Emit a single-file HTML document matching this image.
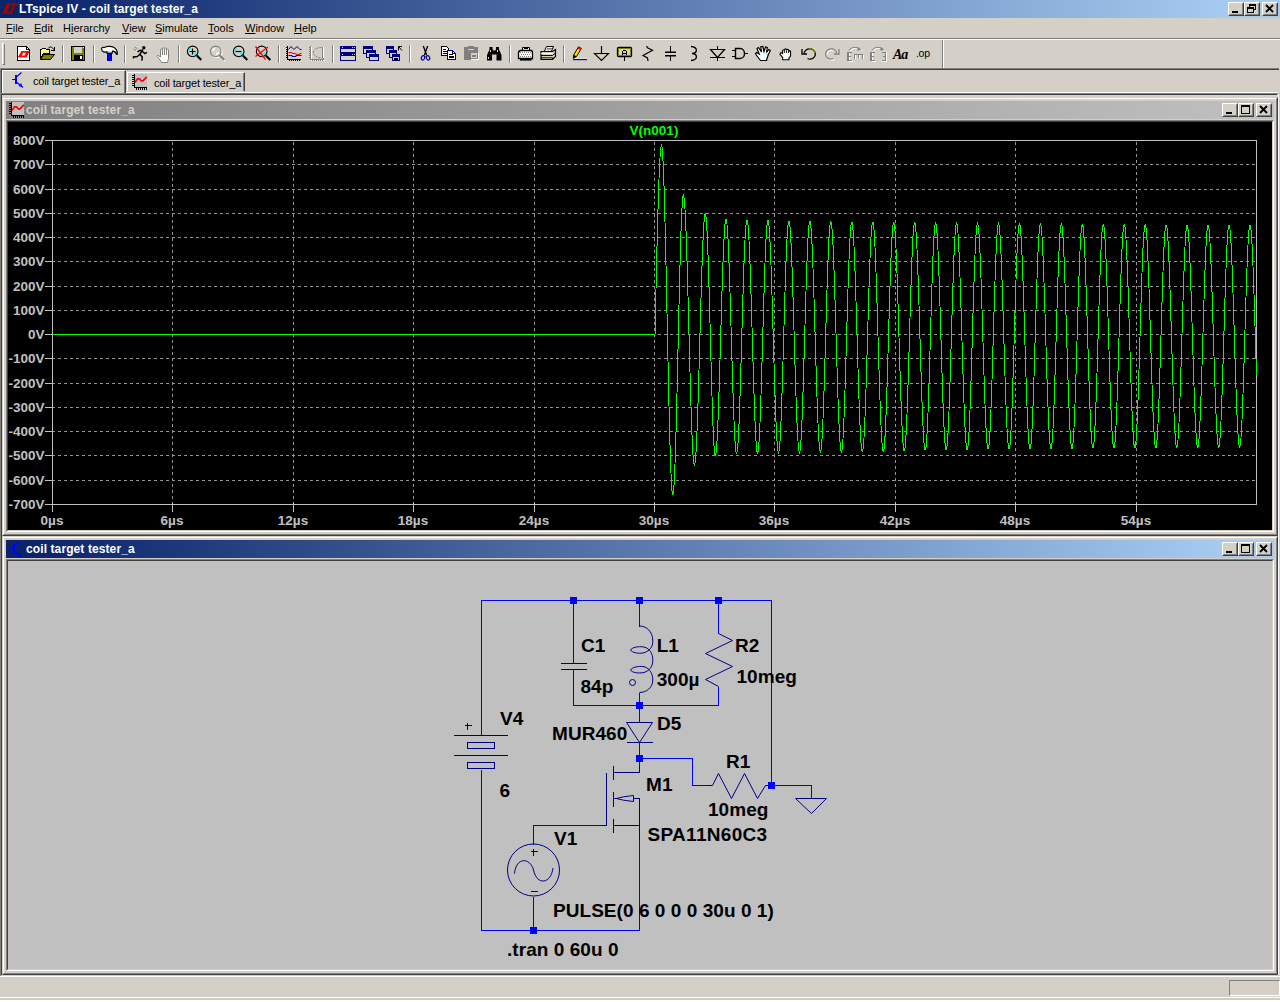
<!DOCTYPE html>
<html><head><meta charset="utf-8"><title>LTspice IV - coil target tester_a</title>
<style>
html,body{margin:0;padding:0;}
body{width:1280px;height:1002px;position:relative;overflow:hidden;background:#d4d0c8;font-family:"Liberation Sans",sans-serif;font-size:11px;color:#000;}
.abs{position:absolute;}
.hl{position:absolute;height:1px;}
.vl{position:absolute;width:1px;}
.tb{position:absolute;height:18px;color:#fff;font-weight:bold;font-size:12px;letter-spacing:0.1px;line-height:18px;white-space:nowrap;}
.btn{position:absolute;width:16px;height:14px;background:#d4d0c8;box-sizing:border-box;border:1px solid;border-color:#fff #404040 #404040 #fff;}
.btn:after{content:"";position:absolute;left:0;top:0;right:0;bottom:0;border:1px solid;border-color:#d4d0c8 #808080 #808080 #d4d0c8;}
.btn svg{position:absolute;left:-1px;top:-1px;z-index:2}
.menu span{position:absolute;top:0;line-height:20px;white-space:nowrap;}
.menu u{text-decoration:underline;}
.win{position:absolute;box-sizing:border-box;background:#d4d0c8;border:1px solid;border-color:#d4d0c8 #404040 #404040 #d4d0c8;}
.win:before{content:"";position:absolute;left:0;top:0;right:0;bottom:0;border:1px solid;border-color:#fff #808080 #808080 #fff;}
.sunk{position:absolute;box-sizing:border-box;border:1px solid;border-color:#808080 #fff #fff #808080;}
.sunk:before{content:"";position:absolute;left:0;top:0;right:0;bottom:0;border:1px solid;border-color:#404040 #d4d0c8 #d4d0c8 #404040;}
.sep{position:absolute;top:45px;width:2px;height:18px;border-left:1px solid #808080;border-right:1px solid #fff;box-sizing:border-box;}
.ico{position:absolute;top:46px;width:16px;height:16px;}
.tab{position:absolute;white-space:nowrap;letter-spacing:-0.17px;}
</style></head><body>

<!-- main title bar -->
<div class="abs" style="left:0;top:0;width:1280px;height:18px;background:linear-gradient(to right,#0a246a 0%,#0a246a 2%,#a6caf0 96%,#a6caf0 100%);"></div>
<svg class="abs" style="left:2px;top:2px;overflow:visible" width="16" height="14" viewBox="0 0 16 14"><path d="M5,1 H9 L5.5,9 H8.5 L7,12 H0 Z M10,1 H16 L15,3.5 H13.2 L9.8,12 H7.4 L10.8,3.5 H9 Z" fill="#a00000"/></svg>
<div class="tb" style="left:19px;top:0;">LTspice IV - coil target tester_a</div>
<div class="btn" style="left:1228px;top:2px;"><svg width="16" height="14"><rect x="4" y="9" width="6" height="2" fill="#000"/></svg></div>
<div class="btn" style="left:1244px;top:2px;"><svg width="16" height="14" shape-rendering="crispEdges"><rect x="5.5" y="2.5" width="6" height="5" fill="none" stroke="#000"/><rect x="5" y="2" width="7" height="2" fill="#000"/><rect x="3.5" y="5.5" width="6" height="5" fill="#d4d0c8" stroke="#000"/><rect x="3" y="5" width="7" height="2" fill="#000"/></svg></div>
<div class="btn" style="left:1262px;top:2px;"><svg width="16" height="14"><path d="M4,3 L11,10 M11,3 L4,10" stroke="#000" stroke-width="1.9" fill="none"/></svg></div>

<!-- menu -->
<div class="abs menu" style="left:0;top:18px;width:1280px;height:20px;">
<span style="left:6px"><u>F</u>ile</span><span style="left:34px"><u>E</u>dit</span><span style="left:63px">H<u>i</u>erarchy</span><span style="left:122px"><u>V</u>iew</span><span style="left:155px"><u>S</u>imulate</span><span style="left:208px"><u>T</u>ools</span><span style="left:245px"><u>W</u>indow</span><span style="left:294px"><u>H</u>elp</span>
</div>
<div class="hl" style="left:0;top:38px;width:1280px;background:#808080"></div>
<div class="hl" style="left:0;top:39px;width:1280px;background:#fff"></div>

<!-- toolbar -->
<div class="abs" style="left:2px;top:43px;width:3px;height:22px;box-sizing:border-box;border:1px solid;border-color:#fff #808080 #808080 #fff;"></div>
<div class="vl" style="left:942px;top:40px;height:28px;background:#808080"></div>
<div class="vl" style="left:943px;top:40px;height:28px;background:#fff"></div>
<svg class="abs" style="left:16px;top:46px;overflow:visible" width="16" height="16" viewBox="0 0 16 16" shape-rendering="crispEdges"><path d="M1.5,0.5 H10.5 L13.5,3.5 V14.5 H1.5 Z" fill="#fff" stroke="#000"/><path d="M10.5,0.5 V3.5 H13.5" fill="none" stroke="#000"/><path d="M5.5,5 H13.8 L10.5,11.5 H1.8 Z" fill="#f00" shape-rendering="auto"/><path d="M7.2,6.8 H9.8 L8.6,9.6 H5.8 Z" fill="#fff" shape-rendering="auto"/></svg>
<svg class="abs" style="left:39px;top:46px;overflow:visible" width="16" height="16" viewBox="0 0 16 16" shape-rendering="crispEdges"><path d="M1.5,12.5 V3.5 H2.5 L3.5,2.5 H6.5 L7.5,3.5 H10.5 V7.5 H4.5 Z" fill="#ffff80" stroke="#000"/><path d="M1.5,13.5 L4.5,8.5 H15.5 L11.5,13.5 Z" fill="#808000" stroke="#000" shape-rendering="auto"/><path d="M9,2.5 C10.5,0.3 13.5,0.5 14.5,3.5" stroke="#000" fill="none" shape-rendering="auto"/><path d="M12,4 H15.5 V1" stroke="#000" fill="none"/></svg>
<svg class="abs" style="left:70px;top:46px;overflow:visible" width="16" height="16" viewBox="0 0 16 16" shape-rendering="crispEdges"><rect x="1.5" y="0.5" width="13" height="14" fill="#808000" stroke="#000"/><rect x="4" y="1" width="8" height="6" fill="#d4d0c8"/><rect x="4" y="9" width="9" height="5" fill="#000"/><rect x="10" y="10" width="2" height="3" fill="#fff"/><rect x="13" y="1" width="1" height="1" fill="#fff"/></svg>
<svg class="abs" style="left:101px;top:46px;overflow:visible" width="16" height="16" viewBox="0 0 16 16" shape-rendering="crispEdges"><defs><linearGradient id="hg" x1="0" y1="0" x2="0" y2="1"><stop offset="0" stop-color="#fff"/><stop offset="0.5" stop-color="#fff"/><stop offset="1" stop-color="#909090"/></linearGradient></defs><path d="M0.6,3.2 C0.4,1.6 2,0.8 3.2,1.6 C5,0.2 10,-0.2 12.6,1.2 C15.2,2.6 16.4,5 16.4,8.2 L15.4,8.2 C14.6,6 13.2,5.2 11.6,5.2 L11,7.4 H6 L5.8,5.8 C4,6.6 0.8,6.2 0.6,3.2 Z" fill="url(#hg)" stroke="#000" stroke-width="1.2" shape-rendering="auto"/><rect x="6" y="7.5" width="5" height="7.5" fill="#0000a0"/><rect x="7" y="7.5" width="3" height="7.5" fill="#0000e0"/></svg>
<svg class="abs" style="left:132px;top:46px;overflow:visible" width="16" height="16" viewBox="0 0 16 16" shape-rendering="crispEdges"><g shape-rendering="auto"><circle cx="11.8" cy="1.8" r="1.7" fill="#000"/><path d="M10.8,3.5 L7.8,8.3 M10.6,4.2 L7.5,4.4 L5.5,6 M10.2,5.2 L12.8,7.6 L15,6.4 M7.8,8.3 L5.3,10.6 L1.5,11 V12.6 M7.8,8.3 L10.3,11 L9.8,14.6" stroke="#000" stroke-width="1.5" fill="none"/><path d="M2.5,1 L5.5,2.8 M1.5,3.2 L4,4.4" stroke="#808080"/></g></svg>
<svg class="abs" style="left:155px;top:46px;overflow:visible" width="16" height="16" viewBox="0 0 16 16" shape-rendering="crispEdges"><g shape-rendering="auto" transform="translate(1,1)"><path d="M5.5,15.5 L3,11.5 L0.8,9.2 L1.8,8.2 L4.5,10 V3 a1,1 0 0 1 2,0 V1.8 a1,1 0 0 1 2,0 V1.9 a1,1 0 0 1 2,0 V3.2 a1,1 0 0 1 2,0 V11.5 L11.5,15.5 Z" fill="#fff" stroke="#808080"/><path d="M6.5,3 V8 M8.5,2 V8 M10.5,3 V8" stroke="#808080" fill="none"/></g></svg>
<svg class="abs" style="left:186px;top:46px;overflow:visible" width="16" height="16" viewBox="0 0 16 16" shape-rendering="crispEdges"><g shape-rendering="auto"><circle cx="6.7" cy="5.4" r="5.3" fill="#d4d0c8" stroke="#000" stroke-width="1.1"/><path d="M2.8,4.8 A4,4 0 0 1 5,2.3" stroke="#00ffff" stroke-width="1.3" fill="none"/><path d="M10.2,6.2 A4,4 0 0 1 8,8.7" stroke="#00ffff" stroke-width="1.3" fill="none"/><path d="M10.8,9.5 L15.3,14" stroke="#000" stroke-width="2.1"/><path d="M3.5,5.5 H9.5 M6.5,2.5 V8.5" stroke="#000" stroke-width="1.2"/></g></svg>
<svg class="abs" style="left:209px;top:46px;overflow:visible" width="16" height="16" viewBox="0 0 16 16" shape-rendering="crispEdges"><g shape-rendering="auto"><circle cx="7.7" cy="6.4" r="5.3" fill="none" stroke="#fff" stroke-width="1.1"/><path d="M11.5,10.5 L16,15" stroke="#fff" stroke-width="2.2"/><circle cx="6.7" cy="5.4" r="5.3" fill="#d4d0c8" stroke="#808080" stroke-width="1.1"/><path d="M3.5,5 A3.2,3.2 0 0 1 6,2.5" stroke="#fff" stroke-width="1.3" fill="none"/><path d="M9.5,6 A3.2,3.2 0 0 1 7,8.5" stroke="#fff" stroke-width="1.3" fill="none"/><path d="M10.8,9.5 L15.3,14" stroke="#808080" stroke-width="2.1"/></g></svg>
<svg class="abs" style="left:232px;top:46px;overflow:visible" width="16" height="16" viewBox="0 0 16 16" shape-rendering="crispEdges"><g shape-rendering="auto"><circle cx="6.7" cy="5.4" r="5.3" fill="#d4d0c8" stroke="#000" stroke-width="1.1"/><path d="M2.8,4.8 A4,4 0 0 1 5,2.3" stroke="#00ffff" stroke-width="1.3" fill="none"/><path d="M10.2,6.2 A4,4 0 0 1 8,8.7" stroke="#00ffff" stroke-width="1.3" fill="none"/><path d="M10.8,9.5 L15.3,14" stroke="#000" stroke-width="2.1"/><path d="M3.5,5.5 H9.5" stroke="#000" stroke-width="1.2"/></g></svg>
<svg class="abs" style="left:255px;top:46px;overflow:visible" width="16" height="16" viewBox="0 0 16 16" shape-rendering="crispEdges"><g shape-rendering="auto"><circle cx="6.7" cy="5.4" r="5.3" fill="#d4d0c8" stroke="#000" stroke-width="1.1"/><path d="M2.8,4.8 A4,4 0 0 1 5,2.3" stroke="#00ffff" stroke-width="1.3" fill="none"/><path d="M10.2,6.2 A4,4 0 0 1 8,8.7" stroke="#00ffff" stroke-width="1.3" fill="none"/><path d="M10.8,9.5 L15.3,14" stroke="#000" stroke-width="2.1"/><path d="M0.5,0.5 L10.5,13.5 M13,1 L0.5,10.5" stroke="#f00" stroke-width="1.3"/></g></svg>
<svg class="abs" style="left:286px;top:46px;overflow:visible" width="16" height="16" viewBox="0 0 16 16" shape-rendering="crispEdges"><path d="M1.5,0 V14 M1,13.5 H15" stroke="#000"/><path d="M0,1.5 H1 M0,3.5 H1 M0,5.5 H1 M0,7.5 H1 M0,9.5 H1 M0,11.5 H1 M3.5,14 V15 M5.5,14 V15 M7.5,14 V15 M9.5,14 V15 M11.5,14 V15 M13.5,14 V15" stroke="#000"/><g shape-rendering="auto" fill="none"><path d="M2.5,3.5 L5,0.5 L8,3.5 L11,0.5 L14,3.5 H15.5" stroke="#000080"/><path d="M2.5,6.5 H5 L7,7.5 H9 L11,8.5 H13 L15.5,7" stroke="#f00" stroke-width="1.1"/><path d="M2.5,9.5 H5.5 L6.5,10.5 H9.5 L10.5,9.5 H15.5" stroke="#0000c0" stroke-width="1.1"/></g></svg>
<svg class="abs" style="left:309px;top:46px;overflow:visible" width="16" height="16" viewBox="0 0 16 16" shape-rendering="crispEdges"><path d="M2.5,1 V15 M2,14.5 H16" stroke="#fff"/><path d="M1.5,0 V14 M1,13.5 H15" stroke="#808080"/><path d="M0,1.5 H1 M0,3.5 H1 M0,5.5 H1 M0,7.5 H1 M0,9.5 H1 M0,11.5 H1 M3.5,14 V15 M5.5,14 V15 M7.5,14 V15 M9.5,14 V15 M11.5,14 V15 M13.5,14 V15" stroke="#808080" stroke-dasharray="1 0"/><g shape-rendering="auto" fill="none"><path d="M12.5,1.5 C6,1.5 4,5 4.5,7 C5,10 8,12 13.5,12" stroke="#808080" stroke-dasharray="2 1"/><path d="M13.5,1 V12 M14.5,2 V13" stroke="#808080"/><path d="M14.5,1 V12" stroke="#fff"/></g></svg>
<svg class="abs" style="left:340px;top:46px;overflow:visible" width="16" height="16" viewBox="0 0 16 16" shape-rendering="crispEdges"><rect x="0.5" y="0.5" width="15" height="6" fill="#d4d0c8" stroke="#000080"/><rect x="0" y="0" width="16" height="3" fill="#000080"/><rect x="0.5" y="7.5" width="15" height="7" fill="#d4d0c8" stroke="#000080"/><rect x="0" y="7" width="16" height="3" fill="#000080"/><rect x="2" y="1" width="1" height="1" fill="#d4d0c8"/><rect x="12" y="1" width="1" height="1" fill="#d4d0c8"/><rect x="14" y="1" width="1" height="1" fill="#d4d0c8"/><rect x="2" y="8" width="1" height="1" fill="#d4d0c8"/><rect x="12" y="8" width="1" height="1" fill="#d4d0c8"/><rect x="14" y="8" width="1" height="1" fill="#d4d0c8"/></svg>
<svg class="abs" style="left:363px;top:46px;overflow:visible" width="16" height="16" viewBox="0 0 16 16" shape-rendering="crispEdges"><rect x="0.5" y="0.5" width="9" height="7" fill="#d4d0c8" stroke="#000080"/><rect x="0" y="0" width="10" height="3" fill="#000080"/><rect x="3.5" y="4.5" width="9" height="7" fill="#d4d0c8" stroke="#000080"/><rect x="3" y="4" width="10" height="3" fill="#000080"/><rect x="6.5" y="8.5" width="9" height="6" fill="#d4d0c8" stroke="#000080"/><rect x="6" y="8" width="10" height="3" fill="#000080"/></svg>
<svg class="abs" style="left:386px;top:46px;overflow:visible" width="16" height="16" viewBox="0 0 16 16" shape-rendering="crispEdges"><rect x="0.5" y="0.5" width="7" height="7" fill="#d4d0c8" stroke="#000080"/><rect x="0" y="0" width="8" height="3" fill="#000080"/><rect x="3.5" y="4.5" width="7" height="7" fill="#d4d0c8" stroke="#000080"/><rect x="3" y="4" width="8" height="3" fill="#000080"/><rect x="6.5" y="8.5" width="7" height="6" fill="#d4d0c8" stroke="#000080"/><rect x="6" y="8" width="8" height="3" fill="#000080"/><rect x="8" y="12" width="4" height="1.5" fill="#000"/><path d="M12.5,4.5 V0.5 H16 M12.5,0.5 L16,4.5" stroke="#000" fill="none" shape-rendering="auto"/></svg>
<svg class="abs" style="left:417px;top:46px;overflow:visible" width="16" height="16" viewBox="0 0 16 16" shape-rendering="crispEdges"><g shape-rendering="auto" fill="none"><path d="M6.3,0 L9.6,9 M10.7,0 L7.4,9" stroke="#000" stroke-width="1.3"/><ellipse cx="6" cy="11.8" rx="1.6" ry="2.3" stroke="#0000a0" stroke-width="1.2" transform="rotate(20 6 11.8)"/><ellipse cx="11" cy="11.8" rx="1.6" ry="2.3" stroke="#0000a0" stroke-width="1.2" transform="rotate(-20 11 11.8)"/></g></svg>
<svg class="abs" style="left:440px;top:46px;overflow:visible" width="16" height="16" viewBox="0 0 16 16" shape-rendering="crispEdges"><path d="M1.5,0.5 H6.5 L8.5,2.5 V9.5 H1.5 Z" fill="#fff" stroke="#000"/><path d="M3,3.5 H6 M3,5.5 H7 M3,7.5 H7" stroke="#000"/><path d="M7.5,4.5 H12.5 L15.5,7.5 V13.5 H7.5 Z" fill="#fff" stroke="#000080"/><path d="M12.5,4.5 V7.5 H15.5" stroke="#000080" fill="none"/><path d="M9,8.5 H13 M9,10.5 H14 M9,11.5 H14" stroke="#000"/></svg>
<svg class="abs" style="left:463px;top:46px;overflow:visible" width="16" height="16" viewBox="0 0 16 16" shape-rendering="crispEdges"><rect x="1" y="1" width="14" height="13" rx="1" fill="#808080"/><rect x="5" y="0" width="6" height="2" fill="#808080"/><rect x="5" y="3" width="6" height="1" fill="#d4d0c8"/><rect x="8.5" y="7.5" width="7" height="6" fill="#d4d0c8" stroke="#fff"/><rect x="7.5" y="6.5" width="7" height="6" fill="#d4d0c8" stroke="#808080"/><path d="M9,9.5 H13 M9,10.5 H13" stroke="#808080"/></svg>
<svg class="abs" style="left:486px;top:46px;overflow:visible" width="16" height="16" viewBox="0 0 16 16" shape-rendering="crispEdges"><g shape-rendering="auto"><path d="M3.5,1 H6.5 V3 L7,4.5 H9.5 L10,3 V1 H13 V3.5 L15.5,9 V14.5 H10.5 V8.5 H6 V14.5 H1 V9 L3.5,3.5 Z" fill="#000"/><rect x="4" y="4" width="1" height="2" fill="#d4d0c8"/><rect x="11" y="4" width="1" height="2" fill="#d4d0c8"/><rect x="2" y="11" width="1" height="2" fill="#d4d0c8"/></g></svg>
<svg class="abs" style="left:517px;top:46px;overflow:visible" width="16" height="16" viewBox="0 0 16 16" shape-rendering="crispEdges"><g shape-rendering="auto"><path d="M5.5,4.5 V1.5 H12.5 V4.5" fill="#fff" stroke="#000"/><path d="M7,3 L8,2 L9,3 L10,2 L11,3" stroke="#000" fill="none"/><path d="M1.5,7 C1.5,5.5 2.5,4.5 4,4.5 H14 C15,4.5 15.5,5.5 15.5,7 V12.5 H1.5 Z" fill="#fff" stroke="#000" stroke-width="1.3"/><path d="M3,6.5 H14 M4,8.5 H14 M3,10.5 H14" stroke="#808080" stroke-dasharray="1 1"/><path d="M3,13.8 H14.5" stroke="#000" stroke-width="1.6"/></g></svg>
<svg class="abs" style="left:540px;top:46px;overflow:visible" width="16" height="16" viewBox="0 0 16 16" shape-rendering="crispEdges"><g shape-rendering="auto"><path d="M4.5,5 L6.5,0.5 H13.5 L11.5,5" fill="#fff" stroke="#000"/><path d="M7,2.5 H12 M6.5,3.8 H11" stroke="#808080"/><path d="M1,5.5 H12.5 L15.5,3.5 V10.5 L12.5,13.5 H1 Z" fill="#d4d0c8" stroke="#000" stroke-width="1.2"/><path d="M1,9.5 H12.5 L15.5,7" stroke="#000" fill="none"/><path d="M1,7.5 H12.5" stroke="#fff"/><rect x="6" y="10.6" width="3" height="1.4" fill="#ffff00"/><path d="M1,11.8 H12.5 V13" stroke="#000" fill="none"/></g></svg>
<svg class="abs" style="left:571px;top:46px;overflow:visible" width="16" height="16" viewBox="0 0 16 16" shape-rendering="crispEdges"><g shape-rendering="auto"><path d="M2,13.5 H16" stroke="#00f" stroke-width="1.4"/><path d="M2,12.5 H16" stroke="#e8e0c0"/><path d="M2.2,12.3 L2.8,8.8 L7.5,0.8 L10.3,2.4 L5.6,10.4 Z" fill="#ffe000" stroke="#000"/><path d="M7,1.8 L9.6,3.3" stroke="#f00" stroke-width="1.6"/><path d="M2.2,12.3 L2.8,8.8 L5.6,10.4 Z" fill="#000"/></g></svg>
<svg class="abs" style="left:594px;top:46px;overflow:visible" width="16" height="16" viewBox="0 0 16 16" shape-rendering="crispEdges"><g shape-rendering="auto"><path d="M7.5,0 V7.5" stroke="#000" stroke-width="1.2"/><path d="M0.5,7.5 H14.5 L7.5,14.5 Z" fill="#c8c088" stroke="#000" stroke-width="1.2"/><path d="M2.5,8.5 H12.5 L7.5,13 Z" fill="#d4d0c8"/></g></svg>
<svg class="abs" style="left:617px;top:46px;overflow:visible" width="16" height="16" viewBox="0 0 16 16" shape-rendering="crispEdges"><rect x="0.5" y="1.5" width="14" height="9" rx="1" fill="#d4d0c8" stroke="#000" stroke-width="1.3" shape-rendering="auto"/><path d="M1.5,2.5 H13.5 V9.5 H1.5 Z" fill="none" stroke="#808000"/><path d="M7.5,11 V15" stroke="#000" stroke-width="1.2"/><path d="M5.5,9 V5.5 L6.5,4.5 H8.5 L9.5,5.5 V9 M5.5,7.5 H9.5" stroke="#000" fill="none"/></svg>
<svg class="abs" style="left:640px;top:46px;overflow:visible" width="16" height="16" viewBox="0 0 16 16" shape-rendering="crispEdges"><path d="M6.5,0 L7.5,1.8 L12.5,4.2 L3,9.5 L7.5,12 L8,15" stroke="#000" stroke-width="1.2" fill="none" shape-rendering="auto"/></svg>
<svg class="abs" style="left:663px;top:46px;overflow:visible" width="16" height="16" viewBox="0 0 16 16" shape-rendering="crispEdges"><path d="M7.5,0 V6 M7.5,10 V15" stroke="#000"/><path d="M2,6.2 H13 M2,9.7 H13" stroke="#000" stroke-width="1.5" shape-rendering="auto"/></svg>
<svg class="abs" style="left:686px;top:46px;overflow:visible" width="16" height="16" viewBox="0 0 16 16" shape-rendering="crispEdges"><path d="M5,0.5 C12,1 12,7 6,7.5 C12,8 12,14 5,14.5" stroke="#000" stroke-width="1.3" fill="none" shape-rendering="auto"/></svg>
<svg class="abs" style="left:709px;top:46px;overflow:visible" width="16" height="16" viewBox="0 0 16 16" shape-rendering="crispEdges"><g shape-rendering="auto"><path d="M8.5,0 V15" stroke="#000"/><path d="M1.5,3.5 H15.5 L8.5,11.5 Z" fill="#d4d0c8" stroke="#000" stroke-width="1.2"/></g><path d="M1,11.5 H16" stroke="#000"/></svg>
<svg class="abs" style="left:732px;top:46px;overflow:visible" width="16" height="16" viewBox="0 0 16 16" shape-rendering="crispEdges"><g shape-rendering="auto"><path d="M3.5,2.5 H8 C14,2.5 14,12.5 8,12.5 H3.5 Z" fill="#d4d0c8" stroke="#000" stroke-width="1.4"/></g><path d="M0,4.5 H3 M0,10.5 H3 M12,7.5 H16" stroke="#000"/></svg>
<svg class="abs" style="left:755px;top:46px;overflow:visible" width="16" height="16" viewBox="0 0 16 16" shape-rendering="crispEdges"><g shape-rendering="auto"><path d="M5.5,14.5 L2,10 L0.5,7.5 L1.8,6.5 L4.2,8 L2,2.5 L3.5,1.5 L6.5,6 L5.8,0.8 L7.8,0.5 L9,5.5 L10.5,1 L12.3,1.5 L11.5,6.5 L13.8,3.5 L15.3,4.5 L13,9.5 L11.5,14.5 Z" fill="#fff" stroke="#000" stroke-width="1.2"/><rect x="11.5" y="7.5" width="1" height="1.5" fill="#00c0c0"/></g></svg>
<svg class="abs" style="left:778px;top:46px;overflow:visible" width="16" height="16" viewBox="0 0 16 16" shape-rendering="crispEdges"><g shape-rendering="auto" transform="translate(0.6,1.6) scale(0.9)"><path d="M4.5,13.5 V11 L1.5,7.5 L2.5,5.5 L4.5,6.5 V3.5 a1,1 0 0 1 2.2,0 V2.5 a1,1 0 0 1 2.2,0 V3 a1,1 0 0 1 2.2,0 V4.5 a1,1 0 0 1 2.2,0 V9.5 L11.5,11.5 V13.5 Z" fill="#fff" stroke="#000" stroke-width="1.2"/><path d="M6.7,3.5 V6 M8.9,3 V6 M11.1,4 V6" stroke="#000" fill="none"/></g></svg>
<svg class="abs" style="left:801px;top:46px;overflow:visible" width="16" height="16" viewBox="0 0 16 16" shape-rendering="crispEdges"><g shape-rendering="auto" fill="none"><path d="M3,7 C5,1.5 12,1.5 14,6.5 C15.5,11 10.5,14.5 6.5,12.5" stroke="#000" stroke-width="1.3"/><path d="M8,2.8 C11,2.2 13.5,4.5 14.2,7" stroke="#808000" stroke-width="1.3"/><path d="M1,3 V8 H6" stroke="#000" stroke-width="1.3"/></g></svg>
<svg class="abs" style="left:824px;top:46px;overflow:visible" width="16" height="16" viewBox="0 0 16 16" shape-rendering="crispEdges"><g shape-rendering="auto" fill="none"><path d="M14,8 C12,2.5 5,2.5 3,7.5 C1.5,12 6.5,15.5 10.5,13.5" stroke="#fff" stroke-width="1.3"/><path d="M13,7 C11,1.5 4,1.5 2,6.5 C0.5,11 5.5,14.5 9.5,12.5" stroke="#808080" stroke-width="1.3"/><path d="M15,3 V8 H10" stroke="#808080" stroke-width="1.3"/></g></svg>
<svg class="abs" style="left:847px;top:46px;overflow:visible" width="16" height="16" viewBox="0 0 16 16" shape-rendering="crispEdges"><g shape-rendering="auto" fill="none"><path d="M3,5.5 C5,1.5 11,1.5 14.5,4.5" stroke="#fff"/><path d="M2,4.5 C4,0.5 10,0.5 13.5,3.5" stroke="#808080"/><path d="M11,1 L14,4 L10,4.5 Z" fill="#808080"/></g><path d="M2.5,7 V15.5 M2,15.5 H6" stroke="#fff" fill="none"/><path d="M1,6 V15 M0,6.5 H5 M0,10.5 H4 M0,14.5 H5" stroke="#808080" stroke-width="1" fill="none"/><rect x="0" y="6" width="2" height="9" fill="#808080"/><path d="M7,8.5 H16 M7.5,8 V13 M11.5,8 V12 M15.5,8 V13" stroke="#808080" fill="none"/><path d="M8.5,9 V13 M12.5,9 V12 M16.5,9 V13" stroke="#fff" fill="none"/></svg>
<svg class="abs" style="left:870px;top:46px;overflow:visible" width="16" height="16" viewBox="0 0 16 16" shape-rendering="crispEdges"><g shape-rendering="auto" fill="none"><path d="M3,5.5 C5,1.5 11,1.5 14.5,4.5" stroke="#fff"/><path d="M2,4.5 C4,0.5 10,0.5 13.5,3.5" stroke="#808080"/><path d="M11,1 L14,4 L10,4.5 Z" fill="#808080"/></g><path d="M2.5,7 V15.5 M2,15.5 H6" stroke="#fff" fill="none"/><path d="M1,6 V15 M0,6.5 H5 M0,10.5 H4 M0,14.5 H5" stroke="#808080" stroke-width="1" fill="none"/><rect x="0" y="6" width="2" height="9" fill="#808080"/><path d="M15.5,6 V15 M12,6.5 H16 M13,10.5 H16 M12,14.5 H16" stroke="#808080" fill="none"/><path d="M16.5,6 V15 M12,15.5 H16.5" stroke="#fff" fill="none"/></svg>
<div class="abs" style="left:893px;top:47px;font:italic bold 14px 'Liberation Serif',serif;line-height:16px;letter-spacing:-1.2px">Aa</div>
<div class="abs" style="left:916px;top:45px;font:10.5px 'Liberation Sans',sans-serif;line-height:16px;letter-spacing:-0.3px">.op</div>
<div class="sep" style="left:62px"></div><div class="sep" style="left:93px"></div><div class="sep" style="left:124px"></div><div class="sep" style="left:178px"></div><div class="sep" style="left:278px"></div><div class="sep" style="left:332px"></div><div class="sep" style="left:409px"></div><div class="sep" style="left:509px"></div><div class="sep" style="left:563px"></div>

<!-- tab bar -->
<div class="hl" style="left:0;top:68px;width:1279px;background:#808080"></div>
<div class="hl" style="left:1px;top:69px;width:1278px;background:#404040"></div>
<div class="vl" style="left:0;top:68px;height:909px;background:#808080"></div>
<div class="vl" style="left:1px;top:69px;height:907px;background:#404040"></div>
<div class="vl" style="left:1278px;top:95px;height:882px;background:#fff"></div>
<div class="hl" style="left:126px;top:92px;width:1152px;background:#fff"></div>
<div class="hl" style="left:1px;top:93px;width:1277px;background:#808080"></div>
<div class="hl" style="left:1px;top:94px;width:1276px;background:#404040"></div>
<!-- tab1 selected -->
<div class="abs" style="left:2px;top:70px;width:124px;height:23px;box-sizing:border-box;border-top:1px solid #fff;border-left:1px solid #fff;border-right:1px solid #404040;"></div>
<div class="vl" style="left:124px;top:71px;height:22px;background:#808080"></div>
<svg class="abs" style="left:9px;top:72px;overflow:visible" width="16" height="16" viewBox="0 0 16 16" shape-rendering="crispEdges"><path d="M3,7.5 H7" stroke="#00f"/><rect x="6" y="3" width="2" height="9" fill="#00f"/><path d="M8,4.5 L12.5,0.5" stroke="#00f" stroke-width="1.2" shape-rendering="auto"/><path d="M8,10.5 L14,15.5" stroke="#00f" stroke-width="1.2" shape-rendering="auto"/><path d="M9.5,14.2 L13.2,14.8 L12.2,11 Z" fill="#00f" shape-rendering="auto"/></svg>
<div class="tab" style="left:33px;top:75px;">coil target tester_a</div>
<!-- tab2 -->
<div class="abs" style="left:127px;top:72px;width:118px;height:19px;box-sizing:border-box;border-top:1px solid #fff;border-left:1px solid #fff;border-right:1px solid #404040;"></div>
<div class="vl" style="left:243px;top:73px;height:18px;background:#808080"></div>
<svg class="abs" style="left:131px;top:74px;overflow:visible" width="16" height="16" viewBox="0 0 16 16" shape-rendering="crispEdges"><rect x="4" y="0" width="12" height="13" fill="#c0c0c0"/><path d="M3.5,0 V14 M3,13.5 H16" stroke="#000"/><path d="M1,1.5 H3 M1,3.5 H3 M1,5.5 H3 M1,7.5 H3 M1,9.5 H3 M1,11.5 H3 M5.5,14 V16 M7.5,14 V16 M9.5,14 V16 M11.5,14 V16 M13.5,14 V16 M15.5,14 V16" stroke="#000"/><path d="M4,8.5 L6.5,4.8 H8.5 L10.2,6.8 H12 L15.8,2.8" stroke="#f00" stroke-width="1.7" fill="none" shape-rendering="auto"/></svg>
<div class="tab" style="left:154px;top:77px;">coil target tester_a</div>

<!-- plot window -->
<div class="win" style="left:2px;top:97px;width:1276px;height:439px;"></div>
<div class="tb" style="left:6px;top:101px;width:1268px;background:linear-gradient(to right,#808080,#c0c0c0);color:#d4d0c8;"><span style="position:absolute;left:20px">coil target tester_a</span></div>
<svg class="abs" style="left:8px;top:102px;overflow:visible" width="16" height="16" viewBox="0 0 16 16" shape-rendering="crispEdges"><rect x="4" y="0" width="12" height="13" fill="#c0c0c0"/><path d="M3.5,0 V14 M3,13.5 H16" stroke="#000"/><path d="M1,1.5 H3 M1,3.5 H3 M1,5.5 H3 M1,7.5 H3 M1,9.5 H3 M1,11.5 H3 M5.5,14 V16 M7.5,14 V16 M9.5,14 V16 M11.5,14 V16 M13.5,14 V16 M15.5,14 V16" stroke="#000"/><path d="M4,8.5 L6.5,4.8 H8.5 L10.2,6.8 H12 L15.8,2.8" stroke="#f00" stroke-width="1.7" fill="none" shape-rendering="auto"/></svg>
<div class="btn" style="left:1222px;top:103px;"><svg width="16" height="14"><rect x="4" y="9" width="6" height="2" fill="#000"/></svg></div>
<div class="btn" style="left:1238px;top:103px;"><svg width="16" height="14" shape-rendering="crispEdges"><rect x="3.5" y="2.5" width="8" height="8" fill="none" stroke="#000"/><rect x="3" y="2" width="9" height="2" fill="#000"/></svg></div>
<div class="btn" style="left:1256px;top:103px;"><svg width="16" height="14"><path d="M4,3 L11,10 M11,3 L4,10" stroke="#000" stroke-width="1.9" fill="none"/></svg></div>
<div class="sunk" style="left:6px;top:120px;width:1268px;height:412px;"></div>
<svg class="abs" style="left:8px;top:122px" width="1264" height="408" viewBox="8 122 1264 408" shape-rendering="crispEdges">
<rect x="8" y="122" width="1264" height="408" fill="#000"/>
<line x1="53" y1="164.5" x2="1256" y2="164.5" stroke="#959595" stroke-dasharray="3 3" stroke-dashoffset="1"/>
<line x1="53" y1="189.5" x2="1256" y2="189.5" stroke="#959595" stroke-dasharray="3 3" stroke-dashoffset="1"/>
<line x1="53" y1="213.5" x2="1256" y2="213.5" stroke="#959595" stroke-dasharray="3 3" stroke-dashoffset="1"/>
<line x1="53" y1="237.5" x2="1256" y2="237.5" stroke="#959595" stroke-dasharray="3 3" stroke-dashoffset="1"/>
<line x1="53" y1="261.5" x2="1256" y2="261.5" stroke="#959595" stroke-dasharray="3 3" stroke-dashoffset="1"/>
<line x1="53" y1="286.5" x2="1256" y2="286.5" stroke="#959595" stroke-dasharray="3 3" stroke-dashoffset="1"/>
<line x1="53" y1="310.5" x2="1256" y2="310.5" stroke="#959595" stroke-dasharray="3 3" stroke-dashoffset="1"/>
<line x1="53" y1="334.5" x2="1256" y2="334.5" stroke="#959595" stroke-dasharray="3 3" stroke-dashoffset="1"/>
<line x1="53" y1="358.5" x2="1256" y2="358.5" stroke="#959595" stroke-dasharray="3 3" stroke-dashoffset="1"/>
<line x1="53" y1="383.5" x2="1256" y2="383.5" stroke="#959595" stroke-dasharray="3 3" stroke-dashoffset="1"/>
<line x1="53" y1="407.5" x2="1256" y2="407.5" stroke="#959595" stroke-dasharray="3 3" stroke-dashoffset="1"/>
<line x1="53" y1="431.5" x2="1256" y2="431.5" stroke="#959595" stroke-dasharray="3 3" stroke-dashoffset="1"/>
<line x1="53" y1="455.5" x2="1256" y2="455.5" stroke="#959595" stroke-dasharray="3 3" stroke-dashoffset="1"/>
<line x1="53" y1="480.5" x2="1256" y2="480.5" stroke="#959595" stroke-dasharray="3 3" stroke-dashoffset="1"/>
<line x1="172.5" y1="142" x2="172.5" y2="504" stroke="#959595" stroke-dasharray="3 3"/>
<line x1="293.5" y1="142" x2="293.5" y2="504" stroke="#959595" stroke-dasharray="3 3"/>
<line x1="413.5" y1="142" x2="413.5" y2="504" stroke="#959595" stroke-dasharray="3 3"/>
<line x1="534.5" y1="142" x2="534.5" y2="504" stroke="#959595" stroke-dasharray="3 3"/>
<line x1="654.5" y1="142" x2="654.5" y2="504" stroke="#959595" stroke-dasharray="3 3"/>
<line x1="774.5" y1="142" x2="774.5" y2="504" stroke="#959595" stroke-dasharray="3 3"/>
<line x1="895.5" y1="142" x2="895.5" y2="504" stroke="#959595" stroke-dasharray="3 3"/>
<line x1="1015.5" y1="142" x2="1015.5" y2="504" stroke="#959595" stroke-dasharray="3 3"/>
<line x1="1136.5" y1="142" x2="1136.5" y2="504" stroke="#959595" stroke-dasharray="3 3"/>
<rect x="52.5" y="140.5" width="1204" height="364" fill="none" stroke="#c0c0c0"/>
<line x1="45" y1="140.5" x2="52" y2="140.5" stroke="#c0c0c0"/>
<line x1="45" y1="164.5" x2="52" y2="164.5" stroke="#c0c0c0"/>
<line x1="45" y1="189.5" x2="52" y2="189.5" stroke="#c0c0c0"/>
<line x1="45" y1="213.5" x2="52" y2="213.5" stroke="#c0c0c0"/>
<line x1="45" y1="237.5" x2="52" y2="237.5" stroke="#c0c0c0"/>
<line x1="45" y1="261.5" x2="52" y2="261.5" stroke="#c0c0c0"/>
<line x1="45" y1="286.5" x2="52" y2="286.5" stroke="#c0c0c0"/>
<line x1="45" y1="310.5" x2="52" y2="310.5" stroke="#c0c0c0"/>
<line x1="45" y1="334.5" x2="52" y2="334.5" stroke="#c0c0c0"/>
<line x1="45" y1="358.5" x2="52" y2="358.5" stroke="#c0c0c0"/>
<line x1="45" y1="383.5" x2="52" y2="383.5" stroke="#c0c0c0"/>
<line x1="45" y1="407.5" x2="52" y2="407.5" stroke="#c0c0c0"/>
<line x1="45" y1="431.5" x2="52" y2="431.5" stroke="#c0c0c0"/>
<line x1="45" y1="455.5" x2="52" y2="455.5" stroke="#c0c0c0"/>
<line x1="45" y1="480.5" x2="52" y2="480.5" stroke="#c0c0c0"/>
<line x1="45" y1="504.5" x2="52" y2="504.5" stroke="#c0c0c0"/>
<line x1="52.5" y1="502" x2="52.5" y2="512" stroke="#c0c0c0"/>
<line x1="172.5" y1="502" x2="172.5" y2="512" stroke="#c0c0c0"/>
<line x1="293.5" y1="502" x2="293.5" y2="512" stroke="#c0c0c0"/>
<line x1="413.5" y1="502" x2="413.5" y2="512" stroke="#c0c0c0"/>
<line x1="534.5" y1="502" x2="534.5" y2="512" stroke="#c0c0c0"/>
<line x1="654.5" y1="502" x2="654.5" y2="512" stroke="#c0c0c0"/>
<line x1="774.5" y1="502" x2="774.5" y2="512" stroke="#c0c0c0"/>
<line x1="895.5" y1="502" x2="895.5" y2="512" stroke="#c0c0c0"/>
<line x1="1015.5" y1="502" x2="1015.5" y2="512" stroke="#c0c0c0"/>
<line x1="1136.5" y1="502" x2="1136.5" y2="512" stroke="#c0c0c0"/>
<polyline points="52.5,334.5 655,334.5 655.0,334.5 655.5,311.7 656.0,289.3 656.5,267.5 657.0,246.7 657.5,227.1 658.0,209.2 658.5,193.0 659.0,179.0 659.5,167.1 660.0,157.8 660.5,151.0 661.0,146.9 661.5,145.5 662.0,147.2 662.5,152.2 663.0,160.5 663.5,171.8 664.0,186.0 664.5,202.8 665.0,221.9 665.5,242.8 666.0,265.3 666.5,288.8 667.0,312.9 667.5,337.1 668.0,361.0 668.5,384.2 669.0,406.1 669.5,426.3 670.0,444.5 670.5,460.3 671.0,473.4 671.5,483.5 672.0,490.5 672.5,494.2 673.0,494.5 673.5,491.6 674.0,485.4 674.5,476.2 675.0,464.1 675.5,449.4 676.0,432.4 676.5,413.5 677.0,393.1 677.5,371.6 678.0,349.6 678.5,327.5 679.0,305.7 679.5,284.8 680.0,265.3 680.5,247.5 681.0,231.8 681.5,218.6 682.0,208.2 682.5,200.8 683.0,196.6 683.5,195.6 684.0,197.5 684.5,202.1 685.0,209.3 685.5,219.0 686.0,231.0 686.5,245.0 687.0,260.7 687.5,277.8 688.0,296.0 688.5,314.9 689.0,334.1 689.5,353.3 690.0,372.0 690.5,389.8 691.0,406.4 691.5,421.4 692.0,434.7 692.5,445.7 693.0,454.5 693.5,460.7 694.0,464.2 694.5,465.0 695.0,463.2 695.5,458.8 696.0,452.0 696.5,442.8 697.0,431.4 697.5,418.2 698.0,403.3 698.5,387.1 699.0,369.8 699.5,352.0 700.0,333.9 700.5,315.9 701.0,298.4 701.5,281.8 702.0,266.3 702.5,252.4 703.0,240.2 703.5,230.1 704.0,222.3 704.5,216.9 705.0,214.1 705.5,213.8 706.0,216.5 706.5,222.1 707.0,230.5 707.5,241.4 708.0,254.6 708.5,269.8 709.0,286.6 709.5,304.6 710.0,323.3 710.5,342.3 711.0,361.1 711.5,379.2 712.0,396.3 712.5,411.9 713.0,425.5 713.5,436.9 714.0,445.8 714.5,451.9 715.0,455.2 715.5,455.5 716.0,453.3 716.5,448.5 717.0,441.3 717.5,431.9 718.0,420.5 718.5,407.3 719.0,392.6 719.5,376.7 720.0,359.9 720.5,342.7 721.0,325.4 721.5,308.3 722.0,291.8 722.5,276.4 723.0,262.2 723.5,249.7 724.0,239.1 724.5,230.5 725.0,224.3 725.5,220.5 726.0,219.2 726.5,220.5 727.0,224.4 727.5,230.6 728.0,239.2 728.5,250.0 729.0,262.6 729.5,276.8 730.0,292.4 730.5,308.9 731.0,326.0 731.5,343.3 732.0,360.5 732.5,377.2 733.0,392.9 733.5,407.4 734.0,420.4 734.5,431.5 735.0,440.6 735.5,447.3 736.0,451.7 736.5,453.4 737.0,452.6 737.5,449.2 738.0,443.1 738.5,434.6 739.0,423.9 739.5,411.1 740.0,396.7 740.5,380.9 741.0,364.0 741.5,346.5 742.0,328.8 742.5,311.3 743.0,294.4 743.5,278.4 744.0,263.8 744.5,250.8 745.0,239.8 745.5,231.0 746.0,224.7 746.5,220.9 747.0,219.8 747.5,221.3 748.0,225.3 748.5,231.7 749.0,240.4 749.5,251.3 750.0,264.0 750.5,278.3 751.0,293.9 751.5,310.4 752.0,327.4 752.5,344.7 753.0,361.8 753.5,378.3 754.0,393.9 754.5,408.3 755.0,421.1 755.5,432.0 756.0,440.8 756.5,447.3 757.0,451.4 757.5,453.0 758.0,452.0 758.5,448.4 759.0,442.1 759.5,433.5 760.0,422.6 760.5,409.8 761.0,395.3 761.5,379.4 762.0,362.6 762.5,345.1 763.0,327.5 763.5,310.1 764.0,293.3 764.5,277.5 765.0,263.0 765.5,250.2 766.0,239.5 766.5,230.9 767.0,224.8 767.5,221.2 768.0,220.3 768.5,222.0 769.0,226.2 769.5,232.8 770.0,241.7 770.5,252.6 771.0,265.4 771.5,279.8 772.0,295.4 772.5,311.8 773.0,328.9 773.5,346.1 774.0,363.1 774.5,379.5 775.0,394.9 775.5,409.1 776.0,421.7 776.5,432.4 777.0,441.0 777.5,447.3 778.0,451.2 778.5,452.6 779.0,451.4 779.5,447.5 780.0,441.1 780.5,432.3 781.0,421.3 781.5,408.4 782.0,393.8 782.5,378.0 783.0,361.1 783.5,343.7 784.0,326.2 784.5,308.9 785.0,292.2 785.5,276.5 786.0,262.3 786.5,249.7 787.0,239.1 787.5,230.8 788.0,224.9 788.5,221.6 789.0,220.9 789.5,222.7 790.0,227.1 790.5,233.9 791.0,242.9 791.5,254.0 792.0,266.9 792.5,281.3 793.0,296.9 793.5,313.4 794.0,330.4 794.5,347.6 795.0,364.5 795.5,380.8 796.0,396.1 796.5,410.1 797.0,422.5 797.5,433.0 798.0,441.4 798.5,447.5 799.0,451.2 799.5,452.4 800.0,451.0 800.5,446.9 801.0,440.3 801.5,431.4 802.0,420.2 802.5,407.2 803.0,392.5 803.5,376.6 804.0,359.8 804.5,342.4 805.0,324.9 805.5,307.6 806.0,291.1 806.5,275.5 807.0,261.4 807.5,249.0 808.0,238.7 808.5,230.5 809.0,224.9 809.5,221.7 810.0,221.3 810.5,223.3 811.0,227.9 811.5,234.8 812.0,244.0 812.5,255.2 813.0,268.2 813.5,282.7 814.0,298.4 814.5,314.9 815.0,331.9 815.5,349.0 816.0,365.8 816.5,382.0 817.0,397.2 817.5,411.0 818.0,423.3 818.5,433.6 819.0,441.8 819.5,447.7 820.0,451.2 820.5,452.2 821.0,450.5 821.5,446.3 822.0,439.5 822.5,430.4 823.0,419.1 823.5,406.0 824.0,391.3 824.5,375.3 825.0,358.4 825.5,341.0 826.0,323.6 826.5,306.4 827.0,289.9 827.5,274.6 828.0,260.6 828.5,248.4 829.0,238.2 829.5,230.3 830.0,224.8 830.5,221.9 831.0,221.7 831.5,223.9 832.0,228.7 832.5,235.8 833.0,245.1 833.5,256.4 834.0,269.5 834.5,284.1 835.0,299.8 835.5,316.3 836.0,333.3 836.5,350.4 837.0,367.1 837.5,383.2 838.0,398.3 838.5,412.0 839.0,424.0 839.5,434.2 840.0,442.2 840.5,447.9 841.0,451.2 841.5,451.9 842.0,450.1 842.5,445.7 843.0,438.7 843.5,429.4 844.0,418.0 844.5,404.8 845.0,390.0 845.5,373.9 846.0,357.0 846.5,339.7 847.0,322.3 847.5,305.2 848.0,288.8 848.5,273.6 849.0,259.8 849.5,247.8 850.0,237.8 850.5,230.1 851.0,224.8 851.5,222.1 852.0,222.1 852.5,224.5 853.0,229.5 853.5,236.7 854.0,246.2 854.5,257.7 855.0,270.9 855.5,285.5 856.0,301.2 856.5,317.8 857.0,334.7 857.5,351.7 858.0,368.4 858.5,384.4 859.0,399.3 859.5,412.9 860.0,424.8 860.5,434.8 861.0,442.6 861.5,448.1 862.0,451.1 862.5,451.7 863.0,449.6 863.5,445.0 864.0,437.9 864.5,428.5 865.0,416.9 865.5,403.6 866.0,388.7 866.5,372.6 867.0,355.7 867.5,338.3 868.0,321.0 868.5,304.0 869.0,287.7 869.5,272.6 870.0,259.0 870.5,247.2 871.0,237.4 871.5,229.9 872.0,224.8 872.5,222.4 873.0,222.5 873.5,225.1 874.0,230.2 874.5,237.7 875.0,247.3 875.5,258.8 876.0,272.1 876.5,286.8 877.0,302.6 877.5,319.1 878.0,336.0 878.5,352.9 879.0,369.5 879.5,385.4 880.0,400.2 880.5,413.6 881.0,425.3 881.5,435.0 882.0,442.6 882.5,447.9 883.0,450.8 883.5,451.1 884.0,448.9 884.5,444.0 885.0,436.8 885.5,427.2 886.0,415.5 886.5,402.1 887.0,387.1 887.5,371.0 888.0,354.1 888.5,336.8 889.0,319.5 889.5,302.7 890.0,286.5 890.5,271.6 891.0,258.1 891.5,246.5 892.0,236.9 892.5,229.6 893.0,224.8 893.5,222.5 894.0,222.9 894.5,225.7 895.0,231.0 895.5,238.6 896.0,248.3 896.5,260.0 897.0,273.3 897.5,288.1 898.0,303.9 898.5,320.4 899.0,337.3 899.5,354.1 900.0,370.6 900.5,386.3 901.0,401.0 901.5,414.2 902.0,425.7 902.5,435.3 903.0,442.7 903.5,447.8 904.0,450.4 904.5,450.5 905.0,448.1 905.5,443.1 906.0,435.6 906.5,425.9 907.0,414.1 907.5,400.6 908.0,385.6 908.5,369.5 909.0,352.6 909.5,335.3 910.0,318.1 910.5,301.3 911.0,285.4 911.5,270.6 912.0,257.3 912.5,245.8 913.0,236.5 913.5,229.4 914.0,224.8 914.5,222.7 915.0,223.3 915.5,226.3 916.0,231.8 916.5,239.5 917.0,249.4 917.5,261.1 918.0,274.6 918.5,289.3 919.0,305.2 919.5,321.7 920.0,338.5 920.5,355.3 921.0,371.6 921.5,387.2 922.0,401.7 922.5,414.8 923.0,426.1 923.5,435.5 924.0,442.7 924.5,447.6 925.0,450.0 925.5,449.9 926.0,447.3 926.5,442.1 927.0,434.5 927.5,424.6 928.0,412.7 928.5,399.1 929.0,384.1 929.5,367.9 930.0,351.0 930.5,333.8 931.0,316.7 931.5,300.0 932.0,284.2 932.5,269.5 933.0,256.4 933.5,245.2 934.0,236.0 934.5,229.2 935.0,224.8 935.5,223.0 936.0,223.7 936.5,226.9 937.0,232.5 937.5,240.4 938.0,250.4 938.5,262.3 939.0,275.8 939.5,290.6 940.0,306.4 940.5,322.9 941.0,339.7 941.5,356.4 942.0,372.7 942.5,388.2 943.0,402.5 943.5,415.4 944.0,426.5 944.5,435.7 945.0,442.7 945.5,447.4 946.0,449.6 946.5,449.3 947.0,446.5 947.5,441.1 948.0,433.3 948.5,423.3 949.0,411.3 949.5,397.6 950.0,382.5 950.5,366.4 951.0,349.5 951.5,332.4 952.0,315.3 952.5,298.7 953.0,283.0 953.5,268.6 954.0,255.6 954.5,244.6 955.0,235.6 955.5,229.0 956.0,224.8 956.5,223.2 957.0,224.1 957.5,227.5 958.0,233.3 958.5,241.4 959.0,251.5 959.5,263.5 960.0,277.1 960.5,292.0 961.0,307.8 961.5,324.3 962.0,341.1 962.5,357.7 963.0,373.9 963.5,389.2 964.0,403.4 964.5,416.2 965.0,427.1 965.5,436.1 966.0,442.9 966.5,447.4 967.0,449.4 967.5,448.9 968.0,445.9 968.5,440.3 969.0,432.4 969.5,422.3 970.0,410.2 970.5,396.4 971.0,381.2 971.5,365.0 972.0,348.1 972.5,331.0 973.0,314.0 973.5,297.5 974.0,282.0 974.5,267.6 975.0,254.9 975.5,244.0 976.0,235.2 976.5,228.8 977.0,224.8 977.5,223.4 978.0,224.6 978.5,228.2 979.0,234.1 979.5,242.3 980.0,252.6 980.5,264.7 981.0,278.4 981.5,293.3 982.0,309.2 982.5,325.7 983.0,342.4 983.5,359.0 984.0,375.1 984.5,390.3 985.0,404.4 985.5,416.9 986.0,427.7 986.5,436.5 987.0,443.1 987.5,447.4 988.0,449.2 988.5,448.6 989.0,445.3 989.5,439.6 990.0,431.5 990.5,421.2 991.0,408.9 991.5,395.1 992.0,379.8 992.5,363.6 993.0,346.7 993.5,329.7 994.0,312.7 994.5,296.4 995.0,280.9 995.5,266.7 996.0,254.1 996.5,243.4 997.0,234.9 997.5,228.6 998.0,224.9 998.5,223.7 999.0,225.0 999.5,228.8 1000.0,234.9 1000.5,243.3 1001.0,253.7 1001.5,265.9 1002.0,279.7 1002.5,294.7 1003.0,310.6 1003.5,327.1 1004.0,343.7 1004.5,360.3 1005.0,376.3 1005.5,391.4 1006.0,405.3 1006.5,417.7 1007.0,428.4 1007.5,437.0 1008.0,443.4 1008.5,447.4 1009.0,449.1 1009.5,448.2 1010.0,444.8 1010.5,438.8 1011.0,430.5 1011.5,420.1 1012.0,407.8 1012.5,393.8 1013.0,378.5 1013.5,362.2 1014.0,345.3 1014.5,328.3 1015.0,311.4 1015.5,295.1 1016.0,279.7 1016.5,265.7 1017.0,253.3 1017.5,242.8 1018.0,234.4 1018.5,228.4 1019.0,224.8 1019.5,223.8 1020.0,225.4 1020.5,229.3 1021.0,235.6 1021.5,244.1 1022.0,254.7 1022.5,267.0 1023.0,280.9 1023.5,295.9 1024.0,311.9 1024.5,328.4 1025.0,345.0 1025.5,361.5 1026.0,377.4 1026.5,392.4 1027.0,406.2 1027.5,418.5 1028.0,429.0 1028.5,437.4 1029.0,443.6 1029.5,447.5 1030.0,448.9 1030.5,447.8 1031.0,444.2 1031.5,438.1 1032.0,429.6 1032.5,419.0 1033.0,406.6 1033.5,392.5 1034.0,377.1 1034.5,360.8 1035.0,343.9 1035.5,326.9 1036.0,310.1 1036.5,293.8 1037.0,278.6 1037.5,264.7 1038.0,252.4 1038.5,242.1 1039.0,233.9 1039.5,228.1 1040.0,224.8 1040.5,224.0 1041.0,225.7 1041.5,229.9 1042.0,236.3 1042.5,245.0 1043.0,255.7 1043.5,268.1 1044.0,282.1 1044.5,297.2 1045.0,313.2 1045.5,329.7 1046.0,346.3 1046.5,362.7 1047.0,378.6 1047.5,393.5 1048.0,407.1 1048.5,419.3 1049.0,429.6 1049.5,437.8 1050.0,443.8 1050.5,447.5 1051.0,448.7 1051.5,447.4 1052.0,443.6 1052.5,437.3 1053.0,428.7 1053.5,418.0 1054.0,405.4 1054.5,391.2 1055.0,375.7 1055.5,359.4 1056.0,342.5 1056.5,325.5 1057.0,308.7 1057.5,292.6 1058.0,277.5 1058.5,263.7 1059.0,251.6 1059.5,241.5 1060.0,233.5 1060.5,227.8 1061.0,224.7 1061.5,224.1 1062.0,226.1 1062.5,230.4 1063.0,237.0 1063.5,245.9 1064.0,256.7 1064.5,269.2 1065.0,283.3 1065.5,298.5 1066.0,314.5 1066.5,331.0 1067.0,347.6 1067.5,363.9 1068.0,379.7 1068.5,394.5 1069.0,408.0 1069.5,420.0 1070.0,430.1 1070.5,438.2 1071.0,444.0 1071.5,447.5 1072.0,448.5 1072.5,447.0 1073.0,443.0 1073.5,436.5 1074.0,427.7 1074.5,416.9 1075.0,404.1 1075.5,389.9 1076.0,374.4 1076.5,358.0 1077.0,341.1 1077.5,324.1 1078.0,307.4 1078.5,291.4 1079.0,276.4 1079.5,262.7 1080.0,250.8 1080.5,240.8 1081.0,233.0 1081.5,227.6 1082.0,224.7 1082.5,224.3 1083.0,226.4 1083.5,231.0 1084.0,237.8 1084.5,246.8 1085.0,257.7 1085.5,270.4 1086.0,284.5 1086.5,299.7 1087.0,315.8 1087.5,332.3 1088.0,348.9 1088.5,365.2 1089.0,380.8 1089.5,395.5 1090.0,408.9 1090.5,420.7 1091.0,430.7 1091.5,438.6 1092.0,444.2 1092.5,447.5 1093.0,448.3 1093.5,446.6 1094.0,442.4 1094.5,435.7 1095.0,426.8 1095.5,415.8 1096.0,402.9 1096.5,388.6 1097.0,373.0 1097.5,356.6 1098.0,339.7 1098.5,322.8 1099.0,306.1 1099.5,290.2 1100.0,275.3 1100.5,261.8 1101.0,250.0 1101.5,240.2 1102.0,232.6 1102.5,227.4 1103.0,224.7 1103.5,224.5 1104.0,226.8 1104.5,231.5 1105.0,238.5 1105.5,247.7 1106.0,258.7 1106.5,271.5 1107.0,285.7 1107.5,301.0 1108.0,317.1 1108.5,333.6 1109.0,350.1 1109.5,366.4 1110.0,381.9 1110.5,396.5 1111.0,409.8 1111.5,421.4 1112.0,431.2 1112.5,438.9 1113.0,444.4 1113.5,447.4 1114.0,448.1 1114.5,446.2 1115.0,441.8 1115.5,434.9 1116.0,425.8 1116.5,414.7 1117.0,401.7 1117.5,387.2 1118.0,371.6 1118.5,355.2 1119.0,338.3 1119.5,321.4 1120.0,304.8 1120.5,289.0 1121.0,274.2 1121.5,260.8 1122.0,249.2 1122.5,239.6 1123.0,232.2 1123.5,227.2 1124.0,224.7 1124.5,224.7 1125.0,227.2 1125.5,232.1 1126.0,239.3 1126.5,248.6 1127.0,259.8 1127.5,272.6 1128.0,286.9 1128.5,302.3 1129.0,318.4 1129.5,334.9 1130.0,351.4 1130.5,367.6 1131.0,383.1 1131.5,397.5 1132.0,410.6 1132.5,422.1 1133.0,431.7 1133.5,439.3 1134.0,444.5 1134.5,447.4 1135.0,447.8 1135.5,445.7 1136.0,441.1 1136.5,434.1 1137.0,424.8 1137.5,413.5 1138.0,400.5 1138.5,385.9 1139.0,370.2 1139.5,353.8 1140.0,336.9 1140.5,320.0 1141.0,303.5 1141.5,287.8 1142.0,273.1 1142.5,259.9 1143.0,248.5 1143.5,239.0 1144.0,231.8 1144.5,227.0 1145.0,224.7 1145.5,225.0 1146.0,227.6 1146.5,232.7 1147.0,240.0 1147.5,249.5 1148.0,260.8 1148.5,273.8 1149.0,288.1 1149.5,303.5 1150.0,319.7 1150.5,336.1 1151.0,352.6 1151.5,368.7 1152.0,384.1 1152.5,398.5 1153.0,411.5 1153.5,422.8 1154.0,432.3 1154.5,439.6 1155.0,444.6 1155.5,447.3 1156.0,447.6 1156.5,445.3 1157.0,440.5 1157.5,433.3 1158.0,423.8 1158.5,412.4 1159.0,399.2 1159.5,384.6 1160.0,368.9 1160.5,352.4 1161.0,335.5 1161.5,318.7 1162.0,302.2 1162.5,286.6 1163.0,272.1 1163.5,259.0 1164.0,247.7 1164.5,238.5 1165.0,231.5 1165.5,226.9 1166.0,224.8 1166.5,225.2 1167.0,228.1 1167.5,233.3 1168.0,240.8 1168.5,250.4 1169.0,261.8 1169.5,274.9 1170.0,289.4 1170.5,304.8 1171.0,321.0 1171.5,337.4 1172.0,353.9 1172.5,369.9 1173.0,385.2 1173.5,399.5 1174.0,412.3 1174.5,423.5 1175.0,432.8 1175.5,439.9 1176.0,444.8 1176.5,447.2 1177.0,447.3 1177.5,444.8 1178.0,439.8 1178.5,432.4 1179.0,422.8 1179.5,411.3 1180.0,398.0 1180.5,383.3 1181.0,367.5 1181.5,351.0 1182.0,334.1 1182.5,317.3 1183.0,301.0 1183.5,285.4 1184.0,271.0 1184.5,258.1 1185.0,247.0 1185.5,237.9 1186.0,231.1 1186.5,226.7 1187.0,224.8 1187.5,225.5 1188.0,228.5 1188.5,233.9 1189.0,241.6 1189.5,251.3 1190.0,262.9 1190.5,276.1 1191.0,290.6 1191.5,306.1 1192.0,322.2 1192.5,338.7 1193.0,355.1 1193.5,371.1 1194.0,386.3 1194.5,400.4 1195.0,413.1 1195.5,424.1 1196.0,433.2 1196.5,440.2 1197.0,444.9 1197.5,447.1 1198.0,447.0 1198.5,444.3 1199.0,439.1 1199.5,431.6 1200.0,421.8 1200.5,410.1 1201.0,396.7 1201.5,382.0 1202.0,366.1 1202.5,349.6 1203.0,332.8 1203.5,316.0 1204.0,299.7 1204.5,284.2 1205.0,270.0 1205.5,257.2 1206.0,246.3 1206.5,237.4 1207.0,230.8 1207.5,226.6 1208.0,224.9 1208.5,225.7 1209.0,229.0 1209.5,234.6 1210.0,242.4 1210.5,252.3 1211.0,264.0 1211.5,277.2 1212.0,291.8 1212.5,307.4 1213.0,323.5 1213.5,340.0 1214.0,356.3 1214.5,372.3 1215.0,387.4 1215.5,401.4 1216.0,413.9 1216.5,424.8 1217.0,433.7 1217.5,440.5 1218.0,444.9 1218.5,447.0 1219.0,446.7 1219.5,443.8 1220.0,438.4 1220.5,430.7 1221.0,420.8 1221.5,409.0 1222.0,395.5 1222.5,380.6 1223.0,364.7 1223.5,348.2 1224.0,331.4 1224.5,314.7 1225.0,298.4 1225.5,283.1 1226.0,268.9 1226.5,256.3 1227.0,245.6 1227.5,236.9 1228.0,230.5 1228.5,226.5 1229.0,225.0 1229.5,226.0 1230.0,229.4 1230.5,235.2 1231.0,243.2 1231.5,253.2 1232.0,265.0 1232.5,278.4 1233.0,293.1 1233.5,308.6 1234.0,324.8 1234.5,341.3 1235.0,357.6 1235.5,373.4 1236.0,388.4 1236.5,402.3 1237.0,414.7 1237.5,425.4 1238.0,434.1 1238.5,440.7 1239.0,445.0 1239.5,446.9 1240.0,446.3 1240.5,443.2 1241.0,437.7 1241.5,429.8 1242.0,419.8 1242.5,407.8 1243.0,394.2 1243.5,379.3 1244.0,363.4 1244.5,346.8 1245.0,330.0 1245.5,313.3 1246.0,297.2 1246.5,281.9 1247.0,267.9 1247.5,255.5 1248.0,244.9 1248.5,236.4 1249.0,230.2 1249.5,226.4 1250.0,225.1 1250.5,226.3 1251.0,229.9 1251.5,235.9 1252.0,244.0 1252.5,254.2 1253.0,266.1 1253.5,279.6 1254.0,294.3 1254.5,309.9 1255.0,326.1 1255.5,342.5 1256.0,358.8 1256.5,374.6" fill="none" stroke="#00ff00" stroke-width="1"/>
<g font-family="Liberation Sans, sans-serif" font-weight="bold" font-size="13.5px" fill="#c0c0c0" shape-rendering="auto">
<text x="44.5" y="144.8" text-anchor="end">800V</text>
<text x="44.5" y="168.8" text-anchor="end">700V</text>
<text x="44.5" y="193.8" text-anchor="end">600V</text>
<text x="44.5" y="217.8" text-anchor="end">500V</text>
<text x="44.5" y="241.8" text-anchor="end">400V</text>
<text x="44.5" y="265.8" text-anchor="end">300V</text>
<text x="44.5" y="290.8" text-anchor="end">200V</text>
<text x="44.5" y="314.8" text-anchor="end">100V</text>
<text x="44.5" y="338.8" text-anchor="end">0V</text>
<text x="44.5" y="362.8" text-anchor="end">-100V</text>
<text x="44.5" y="387.8" text-anchor="end">-200V</text>
<text x="44.5" y="411.8" text-anchor="end">-300V</text>
<text x="44.5" y="435.8" text-anchor="end">-400V</text>
<text x="44.5" y="459.8" text-anchor="end">-500V</text>
<text x="44.5" y="484.8" text-anchor="end">-600V</text>
<text x="44.5" y="508.8" text-anchor="end">-700V</text>
<text x="52" y="525" text-anchor="middle">0µs</text>
<text x="172" y="525" text-anchor="middle">6µs</text>
<text x="293" y="525" text-anchor="middle">12µs</text>
<text x="413" y="525" text-anchor="middle">18µs</text>
<text x="534" y="525" text-anchor="middle">24µs</text>
<text x="654" y="525" text-anchor="middle">30µs</text>
<text x="774" y="525" text-anchor="middle">36µs</text>
<text x="895" y="525" text-anchor="middle">42µs</text>
<text x="1015" y="525" text-anchor="middle">48µs</text>
<text x="1136" y="525" text-anchor="middle">54µs</text>
<text x="654" y="135" text-anchor="middle" fill="#00ff00">V(n001)</text>
</g></svg>

<!-- schematic window -->
<div class="win" style="left:2px;top:536px;width:1276px;height:439px;"></div>
<div class="tb" style="left:6px;top:540px;width:1268px;background:linear-gradient(to right,#0a246a 0%,#0a246a 2%,#a6caf0 96%,#a6caf0 100%);"><span style="position:absolute;left:20px">coil target tester_a</span></div>
<svg class="abs" style="left:7px;top:541px;overflow:visible" width="16" height="16" viewBox="0 0 16 16" shape-rendering="crispEdges"><path d="M3,7.5 H7" stroke="#00f"/><rect x="6" y="3" width="2" height="9" fill="#00f"/><path d="M8,4.5 L12.5,0.5" stroke="#00f" stroke-width="1.2" shape-rendering="auto"/><path d="M8,10.5 L14,15.5" stroke="#00f" stroke-width="1.2" shape-rendering="auto"/><path d="M9.5,14.2 L13.2,14.8 L12.2,11 Z" fill="#00f" shape-rendering="auto"/></svg>
<div class="btn" style="left:1222px;top:542px;"><svg width="16" height="14"><rect x="4" y="9" width="6" height="2" fill="#000"/></svg></div>
<div class="btn" style="left:1238px;top:542px;"><svg width="16" height="14" shape-rendering="crispEdges"><rect x="3.5" y="2.5" width="8" height="8" fill="none" stroke="#000"/><rect x="3" y="2" width="9" height="2" fill="#000"/></svg></div>
<div class="btn" style="left:1256px;top:542px;"><svg width="16" height="14"><path d="M4,3 L11,10 M11,3 L4,10" stroke="#000" stroke-width="1.9" fill="none"/></svg></div>
<div class="sunk" style="left:6px;top:559px;width:1268px;height:412px;"></div>
<svg class="abs" style="left:8px;top:561px" width="1264" height="408" viewBox="8 561 1264 408" shape-rendering="crispEdges">
<rect x="8" y="561" width="1264" height="408" fill="#c0c0c0"/>
<polyline points="481.5,735.5 481.5,600.5 771.5,600.5 771.5,785.5" fill="none" stroke="#0000ff" stroke-width="1" />
<polyline points="573.5,600.5 573.5,626.5" fill="none" stroke="#0000ff" stroke-width="1" />
<polyline points="639.5,600.5 639.5,616.5" fill="none" stroke="#0000ff" stroke-width="1" />
<polyline points="718.5,600.5 718.5,616.5" fill="none" stroke="#0000ff" stroke-width="1" />
<polyline points="573.5,695.5 573.5,705.5 718.5,705.5 718.5,696.5" fill="none" stroke="#0000ff" stroke-width="1" />
<polyline points="639.5,696.5 639.5,712.5" fill="none" stroke="#0000ff" stroke-width="1" />
<polyline points="639.5,750.5 639.5,765.5" fill="none" stroke="#0000ff" stroke-width="1" />
<polyline points="639.5,758.5 692.5,758.5 692.5,785.5 707.5,785.5" fill="none" stroke="#0000ff" stroke-width="1" />
<polyline points="771.5,785.5 811.5,785.5 811.5,798.5" fill="none" stroke="#0000ff" stroke-width="1" />
<polyline points="481.5,769.5 481.5,930.5 639.5,930.5 639.5,838.5" fill="none" stroke="#0000ff" stroke-width="1" />
<polyline points="533.5,896.5 533.5,930.5" fill="none" stroke="#0000ff" stroke-width="1" />
<polyline points="533.5,844.5 533.5,825.5 600.5,825.5" fill="none" stroke="#0000ff" stroke-width="1" />
<polyline points="573.5,626.5 573.5,663.5" fill="none" stroke="#0000ff" stroke-width="1" />
<polyline points="560.5,663.5 586.5,663.5" fill="none" stroke="#000080" stroke-width="1" />
<polyline points="560.5,669.5 586.5,669.5" fill="none" stroke="#000080" stroke-width="1" />
<polyline points="573.5,669.5 573.5,695.5" fill="none" stroke="#0000ff" stroke-width="1" />
<polyline points="639.5,616.5 639.5,626.5" fill="none" stroke="#0000ff" stroke-width="1" />
<polyline points="639.5,692.5 639.5,697.5" fill="none" stroke="#0000ff" stroke-width="1" />
<path d="M639.5,626 C646,626 652.8,631 652.8,641 C652.8,647 650,650.5 644,652.8 C638,654 632,652.5 630.5,650 C632,647.5 638,646 644,647 C650,648.5 652.8,654 652.8,660 C652.8,666 650,670.5 644,672.5 C638,673.7 632,672.5 630.5,670 C632,667.5 638,665.7 644,666.7 C650,668.5 652.8,674 652.8,680 C652.8,688 646,692.5 639.5,692.5" fill="none" stroke="#000080" shape-rendering="auto" stroke-width="1"/>
<circle cx="632.5" cy="682.5" r="3" fill="none" stroke="#000080" shape-rendering="auto"/>
<polyline points="718.5,616.5 718.5,633.5" fill="none" stroke="#0000ff" stroke-width="1" />
<polyline points="718.5,686.5 718.5,696.5" fill="none" stroke="#0000ff" stroke-width="1" />
<polyline points="718.5,633.5 732.5,640.5 705.5,653.5 732.5,666.5 705.5,679.5 718.5,686.5" fill="none" stroke="#000080" stroke-width="1" shape-rendering="auto"/>
<polyline points="639.5,712.5 639.5,722.5" fill="none" stroke="#0000ff" stroke-width="1" />
<polyline points="626.5,722.5 652.5,722.5 639.5,742.5 626.5,722.5" fill="none" stroke="#000080" stroke-width="1" shape-rendering="auto"/>
<polyline points="626.5,742.5 652.5,742.5" fill="none" stroke="#000080" stroke-width="1" />
<polyline points="639.5,742.5 639.5,750.5" fill="none" stroke="#0000ff" stroke-width="1" />
<polyline points="639.5,765.5 639.5,772.5 613.5,772.5" fill="none" stroke="#000080" stroke-width="1" />
<polyline points="613.5,765.5 613.5,779.5" fill="none" stroke="#000080" stroke-width="1" />
<polyline points="613.5,791.5 613.5,806.5" fill="none" stroke="#000080" stroke-width="1" />
<polyline points="613.5,818.5 613.5,832.5" fill="none" stroke="#000080" stroke-width="1" />
<polyline points="606.5,772.5 606.5,825.5 600.5,825.5" fill="none" stroke="#000080" stroke-width="1" />
<polyline points="613.5,825.5 639.5,825.5" fill="none" stroke="#000080" stroke-width="1" />
<polyline points="613.5,798.5 639.5,798.5 639.5,838.5" fill="none" stroke="#000080" stroke-width="1" />
<path d="M616.5,798.5 L623.5,796.8 L633.5,795.5 L633.5,801.5 L623.5,800.2 Z" fill="#c0c0c0" stroke="#000080" shape-rendering="auto"/>
<polyline points="706.5,785.5 712.5,785.5 718.5,773.5 731.5,798.5 744.5,773.5 757.5,798.5 765.5,785.5 771.5,785.5" fill="none" stroke="#000080" stroke-width="1" shape-rendering="auto"/>
<polyline points="795.5,798.5 826.5,798.5 811.5,813.5 795.5,798.5" fill="none" stroke="#000080" stroke-width="1" shape-rendering="auto"/>
<polyline points="453.5,735.5 507.5,735.5" fill="none" stroke="#000080" stroke-width="1" />
<polyline points="453.5,755.5 507.5,755.5" fill="none" stroke="#000080" stroke-width="1" />
<rect x="467.5" y="742.5" width="27" height="6" fill="none" stroke="#000080"/>
<rect x="467.5" y="762.5" width="27" height="6" fill="none" stroke="#000080"/>
<polyline points="464.5,725.5 471.5,725.5" fill="none" stroke="#000080" stroke-width="1" />
<polyline points="467.5,722.5 467.5,729.5" fill="none" stroke="#000080" stroke-width="1" />
<circle cx="533.5" cy="870" r="26" fill="none" stroke="#000080" shape-rendering="auto"/>
<path d="M514.5,873.5 C516,857 530,857 533.5,870 C537,886 551,884 553,868" fill="none" stroke="#000080" shape-rendering="auto"/>
<polyline points="530.5,851.5 537.5,851.5" fill="none" stroke="#000080" stroke-width="1" />
<polyline points="533.5,848.5 533.5,855.5" fill="none" stroke="#000080" stroke-width="1" />
<polyline points="530.5,891.5 537.5,891.5" fill="none" stroke="#000080" stroke-width="1" />
<rect x="570" y="597" width="7" height="7" fill="#0000ff"/>
<rect x="636" y="597" width="7" height="7" fill="#0000ff"/>
<rect x="715" y="597" width="7" height="7" fill="#0000ff"/>
<rect x="636" y="702" width="7" height="7" fill="#0000ff"/>
<rect x="636" y="755" width="7" height="7" fill="#0000ff"/>
<rect x="768" y="782" width="7" height="7" fill="#0000ff"/>
<rect x="530" y="927" width="7" height="7" fill="#0000ff"/>
<g font-family="Liberation Sans, sans-serif" font-weight="bold" font-size="19px" letter-spacing="0.05" fill="#000" shape-rendering="auto">
<text x="581" y="652">C1</text>
<text x="580.5" y="692.5">84p</text>
<text x="656.7" y="652">L1</text>
<text x="656.7" y="685.5">300µ</text>
<text x="735" y="652">R2</text>
<text x="736.5" y="682.5">10meg</text>
<text x="500" y="725">V4</text>
<text x="499.5" y="797">6</text>
<text x="552" y="740">MUR460</text>
<text x="657" y="730">D5</text>
<text x="726" y="768">R1</text>
<text x="646" y="791">M1</text>
<text x="708" y="816">10meg</text>
<text x="647.5" y="841" letter-spacing="0.3">SPA11N60C3</text>
<text x="554" y="845">V1</text>
<text x="553" y="917">PULSE(0 6 0 0 0 30u 0 1)</text>
<text x="507" y="956">.tran 0 60u 0</text>
</g></svg>

<!-- bottom -->
<div class="hl" style="left:1px;top:975px;width:1278px;background:#d4d0c8"></div>
<div class="hl" style="left:0;top:976px;width:1280px;background:#fff"></div>
<div class="abs" style="left:1229px;top:980px;width:51px;height:16px;box-sizing:border-box;border:1px solid;border-color:#808080 #fff #fff #808080;"></div>
<div class="hl" style="left:0;top:997px;width:1280px;background:#fff"></div>
<div class="hl" style="left:0;top:998px;width:1280px;height:2px;background:#cfcbc2"></div>
<div class="hl" style="left:0;top:1000px;width:1280px;height:2px;background:#fff"></div>
</body></html>
